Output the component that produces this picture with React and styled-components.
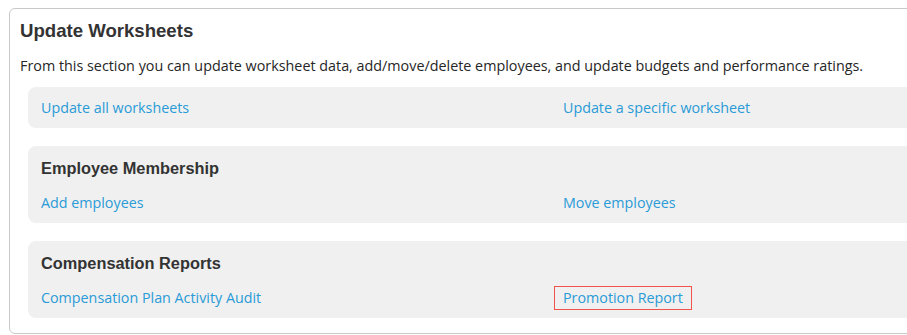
import React from 'react';
import styled, { createGlobalStyle } from 'styled-components';

const Global = createGlobalStyle`
  body {
    margin: 0;
    background: #fff;
    overflow: hidden;
  }
`;

const Page = styled.div`
  width: 907px;
  height: 335px;
  overflow: hidden;
  padding: 8px 0 0 9px;
  box-sizing: border-box;
`;

const Card = styled.section`
  width: 930px;
  box-sizing: border-box;
  border: 1px solid #c9c9c9;
  border-radius: 6px;
  padding: 10px 0 15px 0;
  background: #fff;
`;

const Title = styled.h2`
  margin: 0 0 0 10px;
  font-family: "Liberation Sans", Arial, sans-serif;
  font-weight: bold;
  font-size: 18.6px;
  line-height: 24px;
  color: #333;
`;

const Intro = styled.p`
  margin: 13px 0 11px 10px;
  font-family: "Open Sans", sans-serif;
  font-size: 14.35px;
  line-height: 20px;
  color: #262626;
`;

const Panel = styled.div`
  margin: 0 0 0 18px;
  background: #f0f0f0;
  border-radius: 8px;
  padding: ${p => (p.$heading ? '12px 13px 10px' : '11px 13px 10px')};

  & + & {
    margin-top: 18px;
  }
`;

const PanelTitle = styled.h3`
  margin: 0 0 15px;
  font-family: "Liberation Sans", Arial, sans-serif;
  font-weight: bold;
  font-size: 16.35px;
  line-height: 20px;
  color: #333;
`;

const Links = styled.div`
  display: grid;
  grid-template-columns: 522px 1fr;
`;

const Link = styled.a`
  justify-self: start;
  font-family: "Open Sans", sans-serif;
  font-size: 14.3px;
  line-height: 20px;
  color: #2a9bd7;
  text-decoration: none;
  cursor: pointer;
  ${p =>
    p.$marked &&
    `
    border: 1px solid #f0544a;
    padding: 1px 8px;
    margin: -2px 0 -2px -9px;
  `}
`;

const sections = [
  { links: ['Update all worksheets', 'Update a specific worksheet'] },
  { title: 'Employee Membership', links: ['Add employees', 'Move employees'] },
  { title: 'Compensation Reports', links: ['Compensation Plan Activity Audit', 'Promotion Report'], marked: 1 },
];

export default function App() {
  return (
    <>
      <Global />
      <Page>
        <Card>
          <Title>Update Worksheets</Title>
          <Intro>
            From this section you can update worksheet data, add/move/delete employees, and update budgets and performance ratings.
          </Intro>
          {sections.map((s, i) => (
            <Panel key={i} $heading={!!s.title}>
              {s.title && <PanelTitle>{s.title}</PanelTitle>}
              <Links>
                {s.links.map((l, j) => (
                  <Link key={l} $marked={s.marked === j}>{l}</Link>
                ))}
              </Links>
            </Panel>
          ))}
        </Card>
      </Page>
    </>
  );
}
